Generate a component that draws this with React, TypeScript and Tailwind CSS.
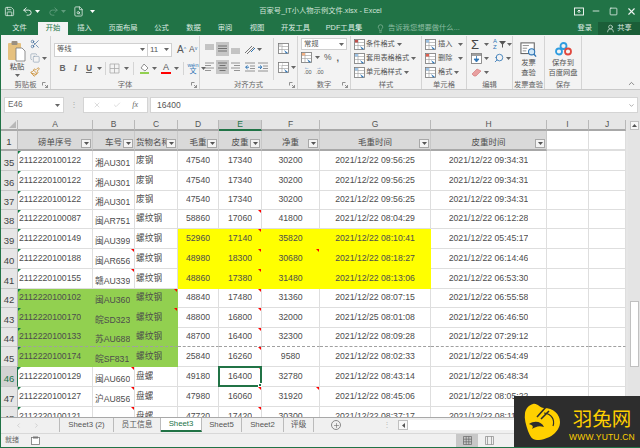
import React from 'react';
import { Scissors, Copy, Paintbrush, Undo2, Redo2, Save, FileSearch, Minus, Square, X, Lightbulb, UserRound, Search, ChevronUp, ChevronDown, ChevronLeft, Plus, Check } from 'lucide-react';

const font = "font-['Liberation_Sans','Noto_Sans_CJK_SC',sans-serif]";

const Caret = ({ className = 'text-[#666]' }: { className?: string }) => (
  <svg width="5" height="3" viewBox="0 0 5 3" className={`shrink-0 ${className}`}>
    <path d="M0 0h5L2.5 3z" fill="currentColor" />
  </svg>
);

const Launcher = () => (
  <svg width="6" height="6" viewBox="0 0 6 6" className="absolute right-[2px] bottom-[1px]">
    <path d="M0.5 0.5h3M0.5 0.5v3M3 3l2.5 2.5M5.5 3v2.5H3" stroke="#777" strokeWidth="0.8" fill="none" />
  </svg>
);

// horizontal text-alignment glyphs
const Lines = ({ kind, active }: { kind: 'top' | 'mid' | 'bot' | 'left' | 'center' | 'right'; active?: boolean }) => {
  const rows: Record<string, string> = {
    top: 'M2 3h9M2 5h9M2 7h9',
    mid: 'M2 4h9M2 6.5h9M2 9h9',
    bot: 'M2 7h9M2 9h9M2 11h9',
    left: 'M2 3h9M2 5.5h6M2 8h9M2 10.5h6',
    center: 'M2 3h9M3.5 5.5h6M2 8h9M3.5 10.5h6',
    right: 'M2 3h9M5 5.5h6M2 8h9M5 10.5h6',
  };
  return (
    <div className={`w-[13px] h-[14px] flex items-center justify-center ${active ? 'bg-[#c6c6c6]' : ''}`}>
      <svg width="13" height="14" viewBox="0 0 13 14">
        <path d={rows[kind]} stroke={active ? '#666' : '#8a8a8a'} strokeWidth="0.9" fill="none" />
      </svg>
    </div>
  );
};

const Indent = ({ flip }: { flip?: boolean }) => (
  <svg width="12" height="12" viewBox="0 0 12 12">
    <path d="M1 2h10M6 5h5M6 7.5h5M1 10h10" stroke="#888" strokeWidth="0.9" />
    <path d={flip ? 'M1 6.2h3M3 4.5l2 1.7-2 1.7' : 'M5 6.2H2M3.5 4.5L1.5 6.2l2 1.7'} stroke="#2f75b5" strokeWidth="1" fill="none" />
  </svg>
);

const TableIcon = ({ accent = '#c0504d' }: { accent?: string }) => (
  <svg width="11" height="11" viewBox="0 0 11 11" className="shrink-0">
    <rect x="0.5" y="0.5" width="10" height="10" fill="#fff" stroke="#777" strokeWidth="0.8" />
    <path d="M0.5 3.5h10M0.5 6.5h10M4 0.5v10" stroke="#999" strokeWidth="0.6" />
    <rect x="1" y="1" width="3" height="2.5" fill={accent} />
    <path d="M6 7l4 3-2 .5z" fill="#2f75b5" />
  </svg>
);

const Group = ({ w, label, launcher, children }: { w: string; label: string; launcher?: boolean; children: React.ReactNode }) => (
  <div className={`${w} h-[53px] shrink-0 relative flex flex-col border-r border-[#d4d4d4] whitespace-nowrap`}>
    <div className="h-[46px] flex">{children}</div>
    <div className="h-[7px] flex items-center justify-center text-[7.3px] text-[#666]">{label}</div>
    {launcher && <Launcher />}
  </div>
);

const StyleRow = ({ text, accent }: { text: string; accent?: string }) => (
  <div className="h-[14px] flex items-center text-[7.2px] text-[#555]">
    <TableIcon accent={accent} />
    <span className="ml-[1px]">{text}</span>
    <span className="ml-[2px]"><Caret /></span>
  </div>
);

const CellRow = ({ text, caretGap, accent }: { text: string; caretGap: string; accent?: string }) => (
  <div className="h-[14px] flex items-center text-[7.2px] text-[#555]">
    <TableIcon accent={accent} />
    <span className="ml-[2px]">{text}</span>
    <span className={caretGap}><Caret /></span>
  </div>
);

const Ribbon = () => (
  <div className="h-[55px] shrink-0 bg-[#f3f3f3] border-b border-[#c8c8c8] flex pt-px">
    <Group w="w-[50px]" label="剪贴板" launcher>
      <div className="w-[29px] flex flex-col items-center pt-[4px] pl-[3px]">
        <svg width="20" height="22" viewBox="0 0 20 22">
          <rect x="1" y="3" width="13" height="17" rx="1" fill="#e6c17f" />
          <rect x="4.5" y="1" width="6" height="4" rx="1" fill="#9a8f80" />
          <path d="M9 8h6l3 3v10H9z" fill="#fff" stroke="#777" strokeWidth="0.8" />
        </svg>
        <span className="text-[7.3px] leading-[9px] text-[#444]">粘贴</span>
        <div className="mt-[3px]"><Caret /></div>
      </div>
      <div className="flex flex-col gap-[4px] pt-[3px]">
        <Scissors size={10} className="text-[#2f5f92]" strokeWidth={1.5} />
        <div className="flex items-center gap-[2px]"><Copy size={10} className="text-[#8a9db0]" strokeWidth={1.5} /><Caret /></div>
        <Paintbrush size={10} className="text-[#c98a2d]" strokeWidth={2} />
      </div>
    </Group>

    <Group w="w-[149px]" label="字体" launcher>
      <div className="flex flex-col pl-[3px] pt-[6px] gap-[4px]">
        <div className="flex items-center">
          <div className="w-[94px] h-[14px] bg-white border border-[#d0d0d0] flex items-center justify-between px-[2px] text-[7.3px] text-[#555]">
            <span>等线</span><Caret />
          </div>
          <div className="w-[24px] h-[14px] bg-white border border-l-0 border-[#d0d0d0] flex items-center justify-between px-[2px] text-[8px] text-[#555]">
            <span>11</span><Caret />
          </div>
          <span className="ml-[5px] text-[10px] text-[#555]">A<sup className="text-[5px] text-[#2f75b5]">^</sup></span>
          <span className="ml-[3px] text-[8.5px] text-[#555]">A<sup className="text-[5px] text-[#2f75b5]">v</sup></span>
        </div>
        <div className="flex items-center h-[14px] text-[#666]">
          <span className="w-[13px] ml-[2px] text-center text-[8.5px] font-bold">B</span>
          <span className="w-[13px] text-center text-[8.5px] italic font-['Liberation_Serif',serif] font-bold">I</span>
          <span className="w-[14px] text-center text-[8.5px] underline font-bold">U</span>
          <span className="ml-[1px]"><Caret /></span>
          <div className="ml-[3px] w-px h-[13px] bg-[#d4d4d4]" />
          <svg width="11" height="11" viewBox="0 0 11 11" className="ml-[3px]">
            <path d="M1 1h9v9H1zM5.5 1v9M1 5.5h9" stroke="#aaa" strokeWidth="0.8" fill="none" />
          </svg>
          <span className="ml-[4px]"><Caret /></span>
          <div className="ml-[4px] w-px h-[13px] bg-[#d4d4d4]" />
          <svg width="11" height="12" viewBox="0 0 11 12" className="ml-[5px]">
            <path d="M2 6l3-4 4 4-3 3z" fill="#fff" stroke="#777" strokeWidth="0.8" />
            <rect x="1" y="10" width="9" height="2" fill="#92d050" />
          </svg>
          <span className="ml-[2px]"><Caret /></span>
          <div className="ml-[4px] w-[10px] flex flex-col items-center">
            <span className="text-[9px] leading-[9px] text-[#555]">A</span>
            <span className="w-[10px] h-[2px] bg-[#ff0000]" />
          </div>
          <span className="ml-[3px]"><Caret /></span>
          <div className="ml-[4px] w-px h-[13px] bg-[#d4d4d4]" />
          <div className="ml-[3px] w-[12px] flex flex-col items-center text-[6px] leading-[6px] text-[#2f75b5]">
            <span>wén</span><span className="text-[7px]">文</span>
          </div>
          <span className="ml-[2px]"><Caret /></span>
        </div>
      </div>
    </Group>

    <Group w="w-[98px]" label="对齐方式" launcher>
      <div className="flex flex-col pl-[3px] pt-[6px] gap-[4px]">
        <div className="flex items-center">
          <Lines kind="top" /><Lines kind="mid" active /><Lines kind="bot" />
          <svg width="12" height="12" viewBox="0 0 12 12" className="ml-[2px]">
            <path d="M1 10L8 3M3 11l7-7" stroke="#777" strokeWidth="1" />
            <path d="M7 9l4-4" stroke="#2f75b5" strokeWidth="1" />
          </svg>
          <span className="ml-[1px]"><Caret /></span>
        </div>
        <div className="flex items-center">
          <Lines kind="left" /><Lines kind="center" active /><Lines kind="right" />
          <span className="ml-[2px]"><Indent /></span>
          <span className="ml-[1px]"><Indent flip /></span>
        </div>
      </div>
      <div className="ml-[4px] my-[2px] w-px bg-[#d4d4d4]" />
      <div className="flex flex-col pl-[4px] pt-[7px] gap-[8px]">
        <TableIcon accent="#d9d9d9" />
        <div className="flex items-center gap-[2px]"><TableIcon accent="#fff" /><Caret /></div>
      </div>
    </Group>

    <Group w="w-[53px]" label="数字" launcher>
      <div className="flex flex-col pl-[3px] pt-[2px]">
        <div className="w-[46px] h-[12px] bg-white border border-[#d0d0d0] flex items-center justify-between px-[2px] text-[7.3px] text-[#555]">
          <span>常规</span><Caret />
        </div>
        <div className="h-[15px] flex items-center text-[#555]">
          <TableIcon accent="#f4b183" />
          <span className="ml-[3px]"><Caret /></span>
          <span className="ml-[4px] text-[8.5px]">%</span>
          <span className="ml-[5px] text-[9px] font-bold leading-[8px]">,</span>
        </div>
        <div className="flex items-center gap-[2px] text-[5.5px] text-[#555] leading-[5px]">
          <span className="pl-[3px] w-[13px] text-[#2f75b5]">←<br /><span className="text-[#555]">.00</span></span>
          <span className="w-[13px] text-[#2f75b5]">→<br /><span className="text-[#555]">.00</span></span>
        </div>
      </div>
    </Group>

    <Group w="w-[71px]" label="样式">
      <div className="flex flex-col pl-[3px] pt-px">
        <StyleRow text="条件格式" />
        <StyleRow text="套用表格格式" accent="#9dc3e6" />
        <StyleRow text="单元格样式" accent="#9dc3e6" />
      </div>
    </Group>

    <Group w="w-[45px]" label="单元格">
      <div className="flex flex-col pl-[3px] pt-px">
        <CellRow text="插入" caretGap="ml-[6px]" accent="#9dc3e6" />
        <CellRow text="删除" caretGap="ml-[6px]" accent="#e06050" />
        <CellRow text="格式" caretGap="ml-[2px]" accent="#9dc3e6" />
      </div>
    </Group>

    <Group w="w-[46px]" label="编辑">
      <div className="flex flex-col pl-[4px] pt-px">
        <div className="h-[14px] flex items-center text-[#444]">
          <span className="text-[13px] leading-[13px] w-[11px]">Σ</span>
          <span className="ml-[2px]"><Caret /></span>
          <span className="ml-[4px] text-[6px] leading-[6px] text-[#2f75b5] w-[6px]">A<br />Z</span>
          <svg width="7" height="7" viewBox="0 0 7 7"><path d="M0 0h7L4 3.5V7L3 6V3.5z" fill="#555" /></svg>
          <span className="ml-[1px]"><Caret /></span>
        </div>
        <div className="h-[14px] flex items-center">
          <svg width="11" height="11" viewBox="0 0 11 11">
            <rect x="0.5" y="0.5" width="10" height="10" fill="#fff" stroke="#777" strokeWidth="0.8" />
            <path d="M0.5 2h10" stroke="#777" strokeWidth="1.4" />
            <path d="M5.5 3v5M3 6l2.5 3L8 6z" stroke="#2f75b5" fill="#2f75b5" strokeWidth="0.8" />
          </svg>
          <span className="ml-[2px]"><Caret /></span>
          <Search size={10} className="ml-[5px] text-[#2f75b5] -scale-x-100" strokeWidth={2} />
          <span className="ml-[2px]"><Caret /></span>
        </div>
        <div className="h-[14px] flex items-center">
          <svg width="11" height="9" viewBox="0 0 11 9">
            <path d="M1 6l5-5 4 2-5 5H3z" fill="#e8a0a0" stroke="#d07070" strokeWidth="0.6" />
          </svg>
          <span className="ml-[2px]"><Caret /></span>
        </div>
      </div>
    </Group>

    <Group w="w-[32px]" label="发票查验">
      <div className="w-full flex flex-col items-center pt-[6px]">
        <svg width="19" height="16" viewBox="0 0 19 18">
          <rect x="1" y="1" width="15" height="12" fill="#fff" stroke="#666" strokeWidth="1.2" />
          <path d="M3 4h7M3 7h5M3 10h4" stroke="#777" strokeWidth="0.9" />
          <circle cx="13" cy="11" r="3.5" fill="#cfe6f6" stroke="#2f75b5" strokeWidth="1.2" />
          <path d="M15.5 13.5L18 16.5" stroke="#2f75b5" strokeWidth="1.5" />
        </svg>
        <span className="text-[7.3px] leading-[10px] text-[#555] text-center">发票<br />查验</span>
      </div>
    </Group>

    <Group w="w-[37px]" label="保存">
      <div className="w-full flex flex-col items-center pt-[6px]">
        <svg width="17" height="14" viewBox="0 0 17 14">
          <circle cx="8.5" cy="4" r="3" fill="none" stroke="#2f9de0" strokeWidth="1.8" />
          <circle cx="4" cy="9.5" r="3" fill="none" stroke="#2f9de0" strokeWidth="1.8" />
          <circle cx="13" cy="9.5" r="3" fill="none" stroke="#e0483e" strokeWidth="1.8" />
        </svg>
        <span className="mt-[2px] text-[7.3px] leading-[10px] text-[#555] text-center">保存到<br />百度网盘</span>
      </div>
    </Group>

    <div className="flex-1 flex items-end justify-end pr-[4px] pb-[1px]">
      <ChevronUp size={9} className="text-[#666]" strokeWidth={2} />
    </div>
  </div>
);

const Tab = ({ w, text, active }: { w: string; text: string; active?: boolean }) => (
  <div className={`${w} h-full flex items-center justify-center text-[7.3px] ${active ? 'bg-[#f3f3f3] text-[#217346]' : 'text-[#dcebe2]'}`}>{text}</div>
);

type Row = { n: number; a: string; b: string; c: string; d: string; e: string; f: string; g: string; h: string };

const ROWS: Row[] = [
  { n: 35, a: '2112220100122', b: '湘AU301', c: '废钢', d: '47540', e: '17340', f: '30200', g: '2021/12/22 09:56:25', h: '2021/12/22 09:34:31' },
  { n: 36, a: '2112220100122', b: '湘AU301', c: '废钢', d: '47540', e: '17340', f: '30200', g: '2021/12/22 09:56:25', h: '2021/12/22 09:34:31' },
  { n: 37, a: '2112220100122', b: '湘AU301', c: '废钢', d: '47540', e: '17340', f: '30200', g: '2021/12/22 09:56:25', h: '2021/12/22 09:34:31' },
  { n: 38, a: '2112220100087', b: '闽AR751', c: '螺纹钢', d: '58860', e: '17060', f: '41800', g: '2021/12/22 08:04:29', h: '2021/12/22 06:12:28' },
  { n: 39, a: '2112220100149', b: '闽AU399', c: '螺纹钢', d: '52960', e: '17140', f: '35820', g: '2021/12/22 08:10:41', h: '2021/12/22 05:45:17' },
  { n: 40, a: '2112220100188', b: '闽AR656', c: '螺纹钢', d: '48980', e: '18300', f: '30680', g: '2021/12/22 08:18:27', h: '2021/12/22 06:14:46' },
  { n: 41, a: '2112220100155', b: '赣AU339', c: '螺纹钢', d: '48860', e: '17380', f: '31480', g: '2021/12/22 08:13:06', h: '2021/12/22 06:53:30' },
  { n: 42, a: '2112220100102', b: '闽AU360', c: '螺纹钢', d: '48840', e: '17480', f: '31360', g: '2021/12/22 08:07:15', h: '2021/12/22 06:55:58' },
  { n: 43, a: '2112220100170', b: '皖SD323', c: '螺纹钢', d: '48800', e: '16800', f: '32000', g: '2021/12/25 08:01:08', h: '2021/12/22 06:46:50' },
  { n: 44, a: '2112220100133', b: '苏AU688', c: '螺纹钢', d: '48700', e: '16400', f: '32300', g: '2021/12/22 08:09:28', h: '2021/12/22 07:29:12' },
  { n: 45, a: '2112220100174', b: '皖SF831', c: '螺纹钢', d: '25840', e: '16260', f: '9580', g: '2021/12/22 08:02:33', h: '2021/12/22 06:54:49' },
  { n: 46, a: '2112220100129', b: '闽AU660', c: '盘螺', d: '49180', e: '16400', f: '32780', g: '2021/12/22 08:43:14', h: '2021/12/22 06:48:34' },
  { n: 47, a: '2112220100127', b: '沪AU856', c: '盘螺', d: '47980', e: '16060', f: '31920', g: '2021/12/22 08:45:06', h: '2021/12/22 08:05:22' },
  { n: 48, a: '2112220100121', b: '', c: '盘螺', d: '47720', e: '17420', f: '30300', g: '2021/12/22 08:37:17', h: '2021/12/22 08:11:38' },
];

const Tri = ({ color }: { color: 'g' | 'r' }) =>
  color === 'g' ? (
    <span className="absolute left-0 top-0 w-0 h-0 border-t-[3px] border-r-[3px] border-t-[#107c41] border-r-transparent" />
  ) : (
    <span className="absolute right-0 top-0 w-0 h-0 border-t-[3px] border-l-[3px] border-t-[#ff0000] border-l-transparent" />
  );

const Cell = ({ row, children, fill, align, red, green, selected }: { row: number; children?: React.ReactNode; fill?: 'y' | 'g'; align: 'l' | 'c' | 'b'; red?: boolean; green?: boolean; selected?: boolean }) => {
  const bg = fill === 'y' ? 'bg-[#ffff00] border-[#ffff00]' : fill === 'g' ? 'bg-[#92d050] border-[#92d050]' : 'bg-white border-[#dedede]';
  const dash = row === 44 ? 'border-b-[#a0a0a0] [border-bottom-style:dashed]' : '';
  const pos = align === 'c' ? 'items-center justify-center' : align === 'l' ? 'items-center pl-px' : 'items-end pl-[2px]';
  return (
    <div className={`relative flex min-w-0 border-r border-b whitespace-nowrap text-[8.7px] text-[#4d4d4d] ${bg} ${pos} ${dash}`}>
      {green && <Tri color="g" />}
      {red && <Tri color="r" />}
      <span className="overflow-hidden">{children}</span>
      {selected && (
        <span className="absolute -left-px -top-px -right-px -bottom-px border-2 border-[#217346]">
          <span className="absolute -right-[2px] -bottom-[2px] w-[4px] h-[4px] bg-[#217346] border border-white" />
        </span>
      )}
    </div>
  );
};

const ColHead = ({ text, active }: { text: string; active?: boolean }) => (
  <div className={`flex items-center justify-center text-[8.5px] border-r border-[#b8b8b8] border-b-2 ${active ? 'bg-[#d2d2d2] text-[#217346] border-b-[#217346]' : 'bg-[#e6e6e6] text-[#555] border-b-[#a8a8a8]'}`}>{text}</div>
);

const FilterBtn = () => (
  <span className="absolute right-[1px] bottom-[1px] w-[10px] h-[9px] bg-[#f4f4f4] border border-[#a8a8a8] flex items-center justify-center">
    <Caret className="text-[#555]" />
  </span>
);

const FilterHead = ({ text, left }: { text: string; left?: boolean }) => (
  <div className={`relative flex items-start pt-[5px] bg-[#d9d9d9] border-r border-b-2 border-r-[#c8c8c8] border-b-[#a8a8a8] text-[8.5px] text-[#4d4d4d] overflow-hidden whitespace-nowrap ${left ? 'pl-[1px]' : 'justify-center'}`}>
    {text}
    <FilterBtn />
  </div>
);

const Sheet = () => (
  <div className="flex h-[297px] shrink-0 overflow-hidden bg-[#e6e6e6]">
    <div className="w-[625px] h-[297px] shrink-0 overflow-hidden grid grid-cols-[17px_75px_42px_43px_41px_43px_58px_111px_116px_42px_37px] grid-rows-[11px_20px_20px_20px_19px_19px_20px_20px_20px_19px_20px_19px_20px_20px_20px_20px]">
      <div className="bg-[#e6e6e6] border-r border-b-2 border-r-[#b8b8b8] border-b-[#a8a8a8] flex items-end justify-end pr-px pb-px">
        <svg width="7" height="7" viewBox="0 0 7 7"><path d="M7 0v7H0z" fill="#b8b8b8" /></svg>
      </div>
      {['A', 'B', 'C', 'D', 'E', 'F', 'G', 'H', 'I', 'J'].map((c) => (
        <ColHead key={c} text={c} active={c === 'E'} />
      ))}

      <div className="bg-[#e6e6e6] border-r border-b-2 border-r-[#b8b8b8] border-b-[#a8a8a8] flex items-end justify-center text-[9.5px] text-[#444]">1</div>
      <FilterHead text="磅单序号" />
      <FilterHead text="车号" />
      <FilterHead text="货物名称" left />
      <FilterHead text="毛重" />
      <FilterHead text="皮重" />
      <FilterHead text="净重" />
      <FilterHead text="毛重时间" />
      <FilterHead text="皮重时间" />
      <div className="bg-white border-r border-b-2 border-r-[#dedede] border-b-[#dedede]" />
      <div className="bg-white border-r border-b-2 border-r-[#dedede] border-b-[#dedede]" />

      {ROWS.map((r) => {
        const yellow = r.n >= 39 && r.n <= 41 ? ('y' as const) : undefined;
        const lime = r.n >= 42 && r.n <= 45 ? ('g' as const) : undefined;
        return (
          <React.Fragment key={r.n}>
            <div className={`flex items-end justify-center text-[9.5px] border-r border-b border-b-[#c8c8c8] ${r.n === 46 ? 'bg-[#d2d2d2] text-[#217346] border-r-[#217346]' : 'bg-[#e6e6e6] text-[#444] border-r-[#b8b8b8]'}`}>{r.n}</div>
            <Cell row={r.n} align="l" fill={lime} green>{r.a}</Cell>
            <Cell row={r.n} align="b" fill={lime} red={[40, 41, 46, 47, 48].includes(r.n)}>{r.b}</Cell>
            <Cell row={r.n} align="l" fill={lime} red={[42, 43].includes(r.n)}>{r.c}</Cell>
            <Cell row={r.n} align="c" fill={yellow}>{r.d}</Cell>
            <Cell row={r.n} align="c" fill={yellow} red={r.n >= 38} selected={r.n === 46}>{r.e}</Cell>
            <Cell row={r.n} align="c" fill={yellow} red={[40, 47].includes(r.n)}>{r.f}</Cell>
            <Cell row={r.n} align="c" fill={yellow}>{r.g}</Cell>
            <Cell row={r.n} align="c">{r.h}</Cell>
            <Cell row={r.n} align="c" />
            <Cell row={r.n} align="c" />
          </React.Fragment>
        );
      })}
    </div>
    <div className="w-[12px] ml-[2px] shrink-0 h-full bg-[#e4e4e4] flex flex-col items-center pt-px">
      <div className="w-[9px] h-[9px] bg-[#f8f8f8] border border-[#c0c0c0] flex items-center justify-center">
        <Caret className="text-[#555] rotate-180" />
      </div>
      <div className="h-[171px] shrink-0" />
      <div className="w-[9px] h-[66px] bg-white border border-[#c0c0c0]" />
    </div>
  </div>
);

const SheetTab = ({ w, text, active }: { w: string; text: string; active?: boolean }) => (
  <div className={`${w} h-[14px] flex items-center justify-center text-[7.8px] border-r border-[#bbb] ${active ? 'bg-white text-[#217346] border-b-2 border-b-[#217346]' : 'text-[#555]'}`}>{text}</div>
);

const Watermark = () => (
  <div className="absolute right-0 bottom-0 w-[126px] h-[51px] bg-[#2d2d2d] flex items-center">
    <svg width="36" height="37" viewBox="0 0 36 37" className="ml-[10px] shrink-0">
      <path d="M9 1C14 0 15 5 20 5C29 5 36 11 36 19C36 29 25 37 13 37C8 37 6 33 4 28C2 22 0 16 1 10C2 5 5 2 9 1Z" fill="#ffd000" />
      <path d="M13 14L22 4M17 16L25 8" stroke="#2d2d2d" strokeWidth="1.6" />
      <path d="M5 21C11 17 18 19 20 24C15 22 11 24 8 26C10 23 8 22 5 21Z" fill="#2d2d2d" />
      <path d="M20 10C28 11 31 17 29 23" stroke="#2d2d2d" strokeWidth="1.2" fill="none" />
    </svg>
    <div className="ml-[9px] pt-[3px] flex flex-col items-center text-[#ffd000]">
      <span className="text-[19.5px] leading-[28px] font-['Noto_Sans_CJK_SC',sans-serif]">羽兔网</span>
      <span className="text-[8.5px] leading-[11px] tracking-[0.2px] font-['Liberation_Sans',sans-serif]">WWW.YUTU.CN</span>
    </div>
  </div>
);

export default function App() {
  return (
    <div className={`relative w-[640px] h-[448px] overflow-hidden flex flex-col bg-[#e6e6e6] border-l border-b border-[#217346] ${font}`}>
      <div className="h-[22px] shrink-0 bg-[#217346] flex items-center text-[#eef5f1]">
        <div className="w-[100px] shrink-0 flex items-center pl-[3px]">
          <Save size={11} strokeWidth={1.6} />
          <Undo2 size={11} strokeWidth={2} className="ml-[7px]" />
          <span className="ml-[2px]"><Caret className="text-white" /></span>
          <Redo2 size={11} strokeWidth={2} className="ml-[8px] text-[#5f9c7c]" />
          <span className="ml-[2px]"><Caret className="text-[#5f9c7c]" /></span>
          <FileSearch size={11} strokeWidth={1.6} className="ml-[7px]" />
          <span className="ml-[6px]"><Caret className="text-white" /></span>
        </div>
        <div className="flex-1 text-center text-[7.3px] whitespace-nowrap text-[#d0e3d8]">百家号_IT小人物示例文件.xlsx - Excel</div>
        <div className="w-[100px] shrink-0 flex items-center justify-end pr-[3px]">
          <svg width="10" height="9" viewBox="0 0 10 9" className="mr-[7px]">
            <rect x="0.5" y="1" width="9" height="7" fill="none" stroke="white" strokeWidth="0.9" />
            <path d="M5 6V3M3.5 4.5L5 3l1.5 1.5" stroke="white" strokeWidth="0.9" fill="none" />
          </svg>
          <Minus size={10} strokeWidth={2} className="mr-[8px]" />
          <Square size={9} strokeWidth={2} className="mr-[8px]" />
          <X size={11} strokeWidth={2.4} />
        </div>
      </div>

      <div className="h-[13px] shrink-0 bg-[#217346] flex items-center">
        <Tab w="w-[37px]" text="文件" />
        <Tab w="w-[30px]" text="开始" active />
        <Tab w="w-[33px]" text="插入" />
        <Tab w="w-[44px]" text="页面布局" />
        <Tab w="w-[33px]" text="公式" />
        <Tab w="w-[31px]" text="数据" />
        <Tab w="w-[32px]" text="审阅" />
        <Tab w="w-[32px]" text="视图" />
        <Tab w="w-[45px]" text="开发工具" />
        <Tab w="w-[52px]" text="PDF工具集" />
        <Lightbulb size={9} strokeWidth={1.4} className="ml-[6px] text-[#a9cdb9]" />
        <span className="ml-[3px] text-[7.3px] text-[#8fbea4] whitespace-nowrap">告诉我您想要做什么...</span>
        <div className="flex-1" />
        <span className="text-[7.3px] text-[#dcebe2] mr-[6px]">登录</span>
        <div className="w-[42px] h-full bg-[#1b5e38] flex items-center justify-center gap-[2px] text-[7.3px] text-[#dcebe2]">
          <UserRound size={9} strokeWidth={1.8} />共享
        </div>
      </div>

      <Ribbon />

      <div className="h-[30px] shrink-0 flex items-start pt-[7px] pl-[3px] bg-[#e6e6e6]">
        <div className="w-[60px] h-[16px] bg-white border border-[#d4d4d4] flex items-center justify-between px-[3px] text-[8.2px] text-[#666]">
          <span>E46</span><Caret />
        </div>
        <div className="w-[19px] h-[16px] flex items-center justify-center text-[#aaa] text-[8px] leading-none">⋮</div>
        <div className="w-[65px] h-[16px] bg-white border border-[#d4d4d4] flex items-center justify-around px-[3px] text-[#bbb]">
          <X size={8} strokeWidth={1.5} />
          <Check size={8} strokeWidth={1.5} />
          <span className="text-[8px] italic font-['Liberation_Serif',serif] text-[#666]">fx</span>
        </div>
        <div className="ml-[2px] w-[488px] h-[16px] bg-white border border-[#d4d4d4] flex items-center justify-between pl-[6px] pr-[2px] text-[8.5px] text-[#555]">
          <span>16400</span>
          <ChevronDown size={7} strokeWidth={2} className="text-[#777]" />
        </div>
      </div>

      <Sheet />

      <div className="h-[16px] shrink-0 flex items-start bg-[#f0f0f0] border-t border-[#a8a8a8]">
        <div className="w-[59px] h-[14px] flex items-center justify-around pl-[8px] pr-[14px] border-r border-[#bbb]">
          <ChevronLeft size={7} className="text-[#bbb]" strokeWidth={2} />
          <ChevronLeft size={7} className="text-[#bbb] rotate-180" strokeWidth={2} />
        </div>
        <SheetTab w="w-[54px]" text="Sheet3 (2)" />
        <SheetTab w="w-[47px]" text="员工信息" />
        <SheetTab w="w-[41px]" text="Sheet3" active />
        <SheetTab w="w-[40px]" text="Sheet5" />
        <SheetTab w="w-[42px]" text="Sheet2" />
        <SheetTab w="w-[30px]" text="评级" />
        <div className="ml-[17px] mt-[2px] w-[10px] h-[10px] rounded-full border border-[#888] flex items-center justify-center">
          <Plus size={7} strokeWidth={2} className="text-[#666]" />
        </div>
        <div className="ml-[42px] mt-[2px] text-[8px] leading-[10px] text-[#bbb]">⋮</div>
        <div className="ml-[7px] mt-[2px] flex-1 h-[10px] flex bg-white">
          <div className="w-[10px] h-[10px] border border-[#c0c0c0] bg-[#f8f8f8] flex items-center justify-center">
            <Caret className="text-[#555] rotate-90" />
          </div>
        </div>
      </div>

      <div className="h-[14px] shrink-0 flex items-center bg-[#f0f0f0] border-t border-[#d8d8d8] pl-[4px] text-[7px] text-[#666]">
        <span>就绪</span>
        <svg width="9" height="9" viewBox="0 0 9 9" className="ml-[12px]">
          <rect x="0.5" y="1.5" width="8" height="7" fill="#fff" stroke="#777" strokeWidth="0.8" />
          <path d="M2 0.5h5v2H2z" fill="#777" />
        </svg>
        <div className="ml-[416px] w-[22px] h-full bg-[#c8c8c8] flex items-center justify-center">
          <svg width="9" height="9" viewBox="0 0 9 9"><path d="M.5.5h8v8h-8zM.5 3.2h8M.5 5.8h8M3.2.5v8M5.8.5v8" stroke="#666" strokeWidth="0.7" fill="none" /></svg>
        </div>
        <svg width="9" height="9" viewBox="0 0 9 9" className="ml-[7px]"><path d="M.5.5h8v8h-8zM2.5.5v8M6.5.5v8" stroke="#888" strokeWidth="0.7" fill="none" /></svg>
      </div>

      <Watermark />
    </div>
  );
}
